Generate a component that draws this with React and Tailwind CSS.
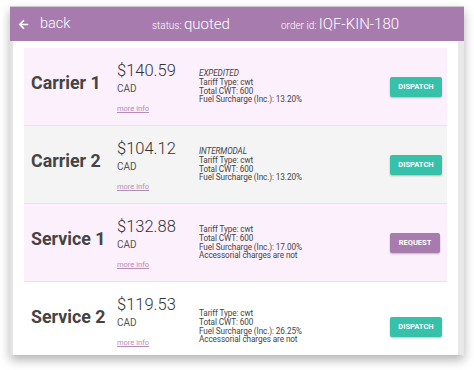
import React from 'react'

const quotes = [
  {
    name: 'Carrier 1',
    price: '$140.59',
    mode: 'EXPEDITED',
    lines: ['Tariff Type: cwt', 'Total CWT: 600', 'Fuel Surcharge (Inc.): 13.20%'],
    action: 'DISPATCH',
    bg: 'bg-[#fdf0fd]',
  },
  {
    name: 'Carrier 2',
    price: '$104.12',
    mode: 'INTERMODAL',
    lines: ['Tariff Type: cwt', 'Total CWT: 600', 'Fuel Surcharge (Inc.): 13.20%'],
    action: 'DISPATCH',
    bg: 'bg-[#f4f4f4]',
  },
  {
    name: 'Service 1',
    price: '$132.88',
    lines: ['Tariff Type: cwt', 'Total CWT: 600', 'Fuel Surcharge (Inc.): 17.00%', 'Accessorial charges are not'],
    action: 'REQUEST',
    bg: 'bg-[#fdf0fd]',
  },
  {
    name: 'Service 2',
    price: '$119.53',
    lines: ['Tariff Type: cwt', 'Total CWT: 600', 'Fuel Surcharge (Inc.): 26.25%', 'Accessorial charges are not'],
    action: 'DISPATCH',
    bg: 'bg-white',
    tall: true,
  },
]

function QuoteRow({ q }) {
  return (
    <div
      className={`flex shrink-0 border-b border-[#ebe3eb] pl-[7px] ${q.bg} ${
        q.tall ? 'h-[90px]' : 'h-[78px]'
      }`}
    >
      <div className="mt-[24px] w-[86px] self-start text-[17.8px] font-bold leading-[22px] text-[#444]">
        {q.name}
      </div>
      <div className="mt-[14px] flex w-[82px] flex-col self-start">
        <span className="text-[16.5px] font-light leading-[18px] text-[#333]">{q.price}</span>
        <span className="mt-[3px] text-[10px] leading-[12px] text-[#555]">CAD</span>
        <a className="mt-[9px] text-[7.5px] leading-[10px] text-[#b58cba] underline">more info</a>
      </div>
      <div className="flex flex-1 flex-col self-center text-[8.2px] leading-[8.6px] tracking-[-0.1px] text-[#444]">
        {q.mode && <span className="italic">{q.mode}</span>}
        {q.lines.map((l) => (
          <span key={l}>{l}</span>
        ))}
      </div>
      <div className="flex w-[57px] shrink-0 self-center">
        <button
          className={`h-[20px] rounded-[2px] text-[7.5px] font-bold text-white shadow-[0_1px_2px_rgba(0,0,0,0.25)] ${
            q.action === 'REQUEST' ? 'w-[50px] bg-[#a87bae]' : 'w-[52px] bg-[#37c1a9]'
          }`}
        >
          {q.action}
        </button>
      </div>
    </div>
  )
}

export default function App() {
  return (
    <div className="h-[370px] w-[474px] bg-white pl-[10px] pr-[10px] pt-[6px] font-['Roboto',sans-serif]">
      <div className="flex h-[349px] w-[454px] flex-col overflow-hidden border-t border-[#c9c9c9] bg-white shadow-[0_5px_10px_rgba(0,0,0,0.3)]">
        <div className="flex h-[34px] shrink-0 items-center bg-[#a87bae] text-white">
          <svg viewBox="0 0 448 512" className="ml-[8px] h-[11px] w-[11px] fill-white">
            <path d="M257.5 445.1l-22.2 22.2c-9.4 9.4-24.6 9.4-33.9 0L7 273c-9.4-9.4-9.4-24.6 0-33.9L201.4 44.7c9.4-9.4 24.6-9.4 33.9 0l22.2 22.2c9.5 9.5 9.3 25-.4 34.3L136.6 216H424c13.3 0 24 10.7 24 24v32c0 13.3-10.7 24-24 24H136.6l120.5 114.8c9.8 9.3 10 24.8.4 34.3z" />
          </svg>
          <span className="ml-[11px] w-[112px] text-[14.5px] font-light">back</span>
          <span className="w-[129px] font-light">
            <span className="text-[10px]">status: </span>
            <span className="text-[15px]">quoted</span>
          </span>
          <span className="font-light">
            <span className="text-[10px]">order id: </span>
            <span className="text-[15px]">IQF-KIN-180</span>
          </span>
        </div>
        <div className="flex min-h-0 flex-1">
          <div className="w-[3px] shrink-0 bg-[#e4e4e4]" />
          <div className="flex min-h-0 flex-1 flex-col overflow-hidden pl-[11px] pr-[11px] pt-[7px]">
            {quotes.map((q) => (
              <QuoteRow key={q.name} q={q} />
            ))}
          </div>
          <div className="w-[6px] shrink-0 bg-[#e8e8e8]" />
        </div>
      </div>
    </div>
  )
}
